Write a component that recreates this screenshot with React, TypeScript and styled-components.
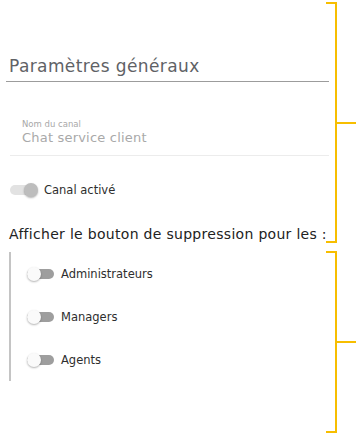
import styled, { createGlobalStyle } from 'styled-components';

const GlobalStyle = createGlobalStyle`
  html, body {
    margin: 0;
    padding: 0;
    background: #ffffff;
  }
  body {
    font-family: 'DejaVu Sans', 'Noto Sans', sans-serif;
  }
`;

const roles = ['Administrateurs', 'Managers', 'Agents'];

const App = () => {
  return (
    <Page>
      <GlobalStyle />
      <Header>
        <Title>Paramètres généraux</Title>
      </Header>
      <Field>
        <FieldLabel>Nom du canal</FieldLabel>
        <FieldValue>Chat service client</FieldValue>
      </Field>
      <ToggleRow $first>
        <Switch $on />
        <ToggleText>Canal activé</ToggleText>
      </ToggleRow>
      <Question>Afficher le bouton de suppression pour les :</Question>
      <RoleGroup>
        {roles.map((r) => (
          <ToggleRow key={r}>
            <Switch />
            <ToggleText>{r}</ToggleText>
          </ToggleRow>
        ))}
      </RoleGroup>
      <Brace $top={2} $height={241} />
      <Brace $top={251} $height={182} />
    </Page>
  );
};

export default App;

const Page = styled.div`
  position: relative;
  width: 358px;
  height: 434px;
  overflow: hidden;
  background: #ffffff;
  padding-top: 55px;
  box-sizing: border-box;
`;

const Header = styled.div`
  margin: 0 29px 0 6px;
  padding: 0 0 0 3px;
  height: 27px;
  border-bottom: 1px solid #9c9c9c;
  box-sizing: border-box;
`;

const Title = styled.h1`
  margin: 0;
  font-size: 17px;
  font-weight: 400;
  letter-spacing: 0.4px;
  line-height: 22px;
  color: #5f6266;
`;

const Field = styled.div`
  margin: 37px 29px 0 10px;
  padding: 0 0 9px 12px;
  border-bottom: 1px solid #ececec;
`;

const FieldLabel = styled.div`
  font-size: 8.5px;
  line-height: 11px;
  color: #a8a8a8;
`;

const FieldValue = styled.div`
  font-size: 13px;
  letter-spacing: 0.2px;
  line-height: 16px;
  color: #a9a9a9;
`;

const ToggleRow = styled.div<{ $first?: boolean }>`
  display: flex;
  align-items: center;
  gap: 7px;
  height: 16px;
  margin-top: ${(p) => (p.$first ? '26px' : '0')};
`;

const Switch = styled.span<{ $on?: boolean }>`
  position: relative;
  display: inline-block;
  width: 27px;
  height: 10px;
  border-radius: 5px;
  background: ${(p) => (p.$on ? '#e2e2e2' : '#9e9e9e')};
  margin-left: ${(p) => (p.$on ? '10px' : '16px')};
  &::after {
    content: '';
    position: absolute;
    top: -2px;
    left: ${(p) => (p.$on ? '14px' : '0')};
    width: 14px;
    height: 14px;
    border-radius: 50%;
    background: ${(p) => (p.$on ? '#bdbdbd' : '#fafafa')};
    box-shadow: 0 1px 2px rgba(0, 0, 0, 0.3);
  }
`;

const ToggleText = styled.span`
  font-size: 11.5px;
  color: #2e2e2e;
`;

const Question = styled.div`
  margin: 28px 0 0 9px;
  font-size: 14px;
  letter-spacing: 0.3px;
  line-height: 16px;
  color: #222222;
`;

const RoleGroup = styled.div`
  margin: 10px 0 0 9px;
  padding: 14px 0 0;
  border-left: 2px solid #c4c4c4;
  display: flex;
  flex-direction: column;
  gap: 27px;
  height: 129px;
  box-sizing: border-box;
`;

const Brace = styled.div<{ $top: number; $height: number }>`
  position: absolute;
  top: ${(p) => p.$top}px;
  left: 326px;
  width: 11px;
  height: ${(p) => p.$height}px;
  border: 2px solid #f7be00;
  border-left: none;
  box-sizing: border-box;
  &::after {
    content: '';
    position: absolute;
    top: 50%;
    left: 9px;
    width: 21px;
    height: 2px;
    margin-top: -1px;
    background: #f7be00;
  }
`;
